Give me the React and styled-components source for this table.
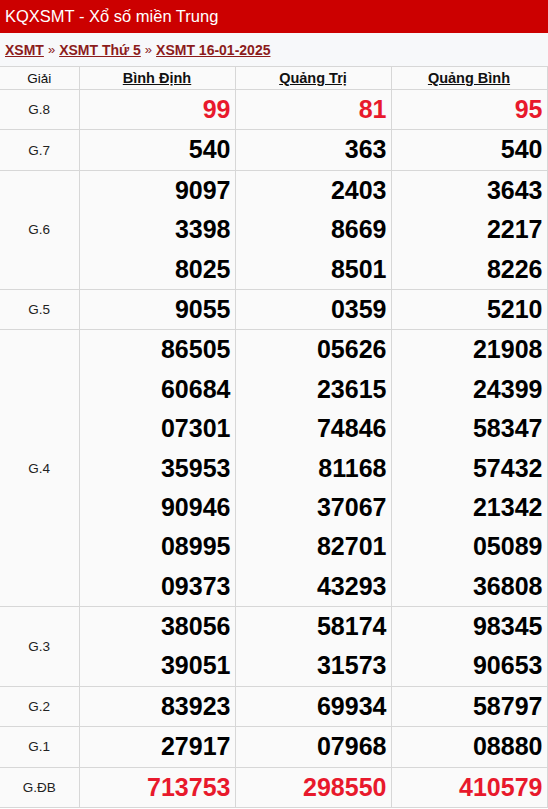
import React from 'react';
import styled, { createGlobalStyle } from 'styled-components';

const GlobalStyle = createGlobalStyle`
  body {
    margin: 0;
    background: #ffffff;
    font-family: "Liberation Sans", Arial, sans-serif;
  }
`;

const Wrapper = styled.div`
  width: 548px;
  background: #f7f8fa;
`;

const TitleBar = styled.div`
  height: 33px;
  background-color: #cc0000;
  color: #ffffff;
  font-size: 16.5px;
  line-height: 33px;
  padding-left: 5px;
  box-sizing: border-box;
`;

const Crumbs = styled.div`
  height: 33px;
  display: flex;
  align-items: center;
  padding-left: 5px;
  font-size: 14px;
  font-weight: bold;
  color: #8c1c1c;
`;

const CrumbLink = styled.a`
  color: #8c1c1c;
  text-decoration: underline;
`;

const Sep = styled.span`
  font-weight: normal;
  margin: 0 4px;
  font-size: 13px;
`;

const Table = styled.table`
  width: 547px;
  border-collapse: collapse;
  table-layout: fixed;
  background: #fafafa;
`;

const Th = styled.th`
  height: 22px;
  padding: 0;
  border: 1px solid #d7d7d7;
  font-size: ${(p) => (p.$plain ? '13.5px' : '14.5px')};
  font-weight: ${(p) => (p.$plain ? 'normal' : 'bold')};
  text-decoration: ${(p) => (p.$plain ? 'none' : 'underline')};
  color: #111;
  text-align: center;
  &:first-child {
    border-left: none;
  }
`;

const Label = styled.td`
  padding: 0;
  border: 1px solid #d7d7d7;
  border-left: none;
  text-align: center;
  font-size: 13.5px;
  color: #222;
`;

const Cell = styled.td`
  padding: 0 4px 0 0;
  border: 1px solid #d7d7d7;
  text-align: right;
  vertical-align: top;
`;

const Num = styled.div`
  height: ${(p) => p.$h}px;
  line-height: ${(p) => p.$h}px;
  font-size: 25px;
  font-weight: bold;
  color: ${(p) => (p.$red ? '#e8192c' : '#000')};
`;

const provinces = ['Bình Định', 'Quảng Trị', 'Quảng Bình'];

const rows = [
  { name: 'G.8', red: true, data: [['99'], ['81'], ['95']] },
  { name: 'G.7', data: [['540'], ['363'], ['540']] },
  { name: 'G.6', data: [['9097', '3398', '8025'], ['2403', '8669', '8501'], ['3643', '2217', '8226']] },
  { name: 'G.5', data: [['9055'], ['0359'], ['5210']] },
  {
    name: 'G.4',
    data: [
      ['86505', '60684', '07301', '35953', '90946', '08995', '09373'],
      ['05626', '23615', '74846', '81168', '37067', '82701', '43293'],
      ['21908', '24399', '58347', '57432', '21342', '05089', '36808'],
    ],
  },
  { name: 'G.3', data: [['38056', '39051'], ['58174', '31573'], ['98345', '90653']] },
  { name: 'G.2', data: [['83923'], ['69934'], ['58797']] },
  { name: 'G.1', data: [['27917'], ['07968'], ['08880']] },
  { name: 'G.ĐB', red: true, data: [['713753'], ['298550'], ['410579']] },
];

export default function App() {
  return (
    <Wrapper>
      <GlobalStyle />
      <TitleBar>KQXSMT - Xổ số miền Trung</TitleBar>
      <Crumbs>
        <CrumbLink>XSMT</CrumbLink>
        <Sep>»</Sep>
        <CrumbLink>XSMT Thứ 5</CrumbLink>
        <Sep>»</Sep>
        <CrumbLink>XSMT 16-01-2025</CrumbLink>
      </Crumbs>
      <Table>
        <colgroup>
          <col style={{ width: 79 }} />
          <col style={{ width: 156 }} />
          <col style={{ width: 156 }} />
          <col style={{ width: 156 }} />
        </colgroup>
        <thead>
          <tr>
            <Th $plain>Giải</Th>
            {provinces.map((p) => (
              <Th key={p}>{p}</Th>
            ))}
          </tr>
        </thead>
        <tbody>
          {rows.map((r) => (
            <tr key={r.name}>
              <Label>{r.name}</Label>
              {r.data.map((nums, i) => (
                <Cell key={i}>
                  {nums.map((n, j) => (
                    <Num key={j} $red={r.red} $h={39.4}>
                      {n}
                    </Num>
                  ))}
                </Cell>
              ))}
            </tr>
          ))}
        </tbody>
      </Table>
    </Wrapper>
  );
}
